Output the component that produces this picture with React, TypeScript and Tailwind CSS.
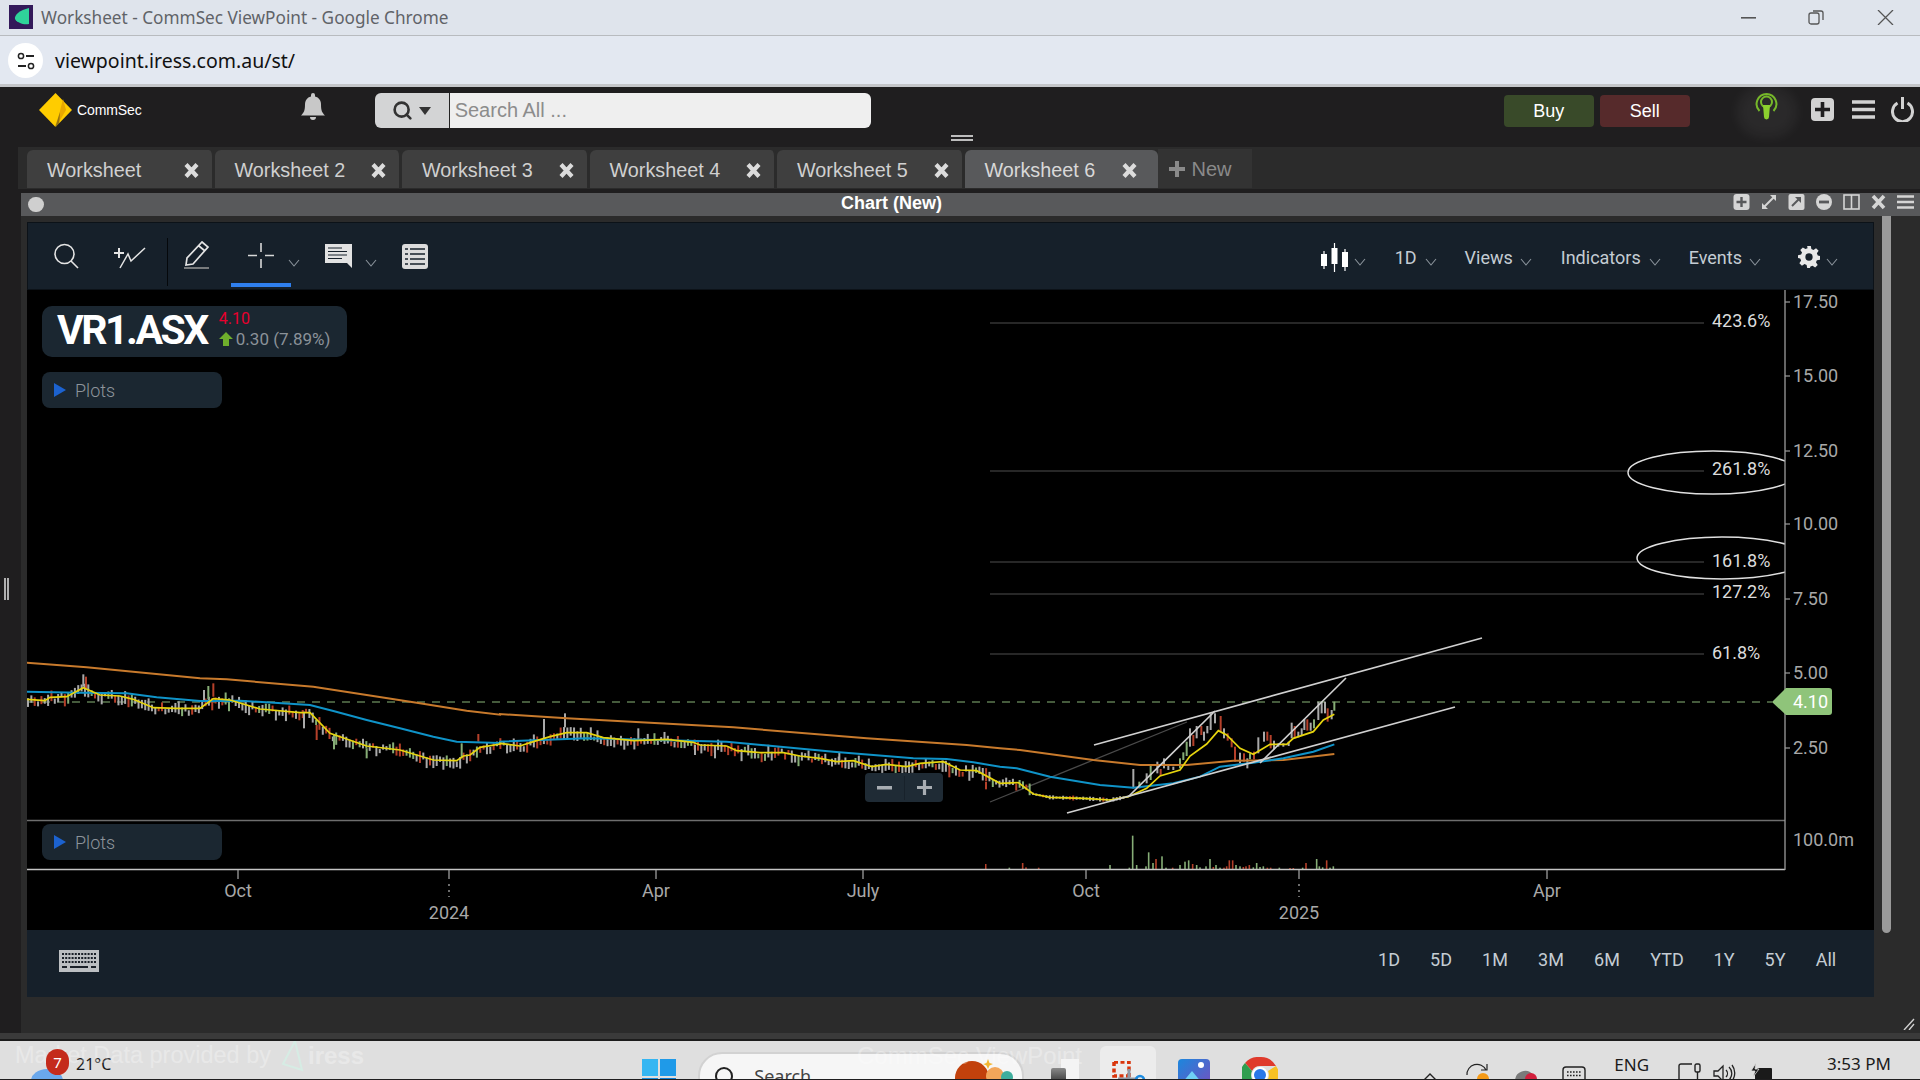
import { Search } from 'lucide-react';

type P = [number, number];

const z3 = (p: P): P => [1000 + p[0] / 3, 620 + p[1] / 3];
const z4 = (p: P): P => [p[0] / 3, 640 + p[1] / 3];
const z5 = (p: P): P => [500 + p[0] / 3, 640 + p[1] / 3];

const yellow: P[] = [
  ...([[80,178],[135,182],[150,172],[200,170],[250,143],[300,165],[360,168],[400,178],[460,203],[530,205],[600,205],[640,176],[690,180],[740,195],[780,207],[900,218],[930,218],[990,280],[1100,318],[1200,330],[1300,360],[1370,362],[1390,348],[1410,345],[1440,322],[1500,312]] as P[]).map(z4),
  ...([[0,310],[60,318],[100,305],[150,290],[200,278],[260,278],[310,293],[400,302],[500,298],[580,307],[600,315],[680,318],[710,332],[780,338],[850,338],[900,348],[960,355],[1010,365],[1060,362],[1115,380],[1160,373],[1220,380],[1260,370],[1330,365],[1380,390],[1430,392]] as P[]).map(z5),
  ...([[0,490],[55,488],[100,522],[150,532],[250,535],[330,540],[385,530],[440,505],[480,468],[540,450],[570,408],[620,372],[655,332],[680,345],[720,385],[760,403],[810,373],[860,373],[880,355],[940,335],[970,300],[1003,283]] as P[]).map(z3),
];

const blue: P[] = [
  ...([[80,155],[240,158],[380,160],[470,172],[600,183],[720,182],[930,195],[1000,213],[1100,240],[1200,265],[1300,290],[1370,305],[1500,309]] as P[]).map(z4),
  ...([[0,305],[260,295],[680,305],[1000,335],[1240,355],[1340,357],[1420,367]] as P[]).map(z5),
  ...([[0,440],[50,445],[150,470],[300,495],[400,503],[520,490],[600,470],[660,440],[760,428],[850,415],[940,395],[1003,373]] as P[]).map(z3),
];

const orange: P[] = [
  ...([[80,68],[260,82],[600,115],[680,118],[940,140],[1100,165],[1250,188],[1400,212],[1500,224]] as P[]).map(z4),
  ...([[0,222],[200,235],[700,262],[1100,295],[1400,315]] as P[]).map(z5),
  ...([[0,385],[60,390],[280,420],[420,435],[560,435],[700,422],[850,420],[1003,402]] as P[]).map(z3),
];

const GRAY = '#a9a9a9';
const GREEN = '#86ad76';
const RED = '#b5402a';

const pts = (a: P[]) => a.map((p) => p.join(',')).join(' ');

function yAt(x: number) {
  for (let i = 1; i < yellow.length; i++) {
    if (x <= yellow[i][0]) {
      const [x0, y0] = yellow[i - 1];
      const [x1, y1] = yellow[i];
      return y0 + ((y1 - y0) * (x - x0)) / (x1 - x0 || 1);
    }
  }
  return yellow[yellow.length - 1][1];
}

// seeded so the bars stay put between renders
let seed = 42;
const rnd = () => {
  seed = (seed * 16807) % 2147483647;
  return seed / 2147483647;
};

type Bar = [number, number, number, string];
const bars: Bar[] = [];
for (let x = 28; x < 1128; x += 3.35) {
  const r = rnd();
  const flat = x > 1030;
  const h = flat ? 2 + rnd() * 3 : 4 + rnd() * 9;
  const mid = yAt(x) + (flat ? 0 : 1.5 + (rnd() - 0.5) * 7);
  bars.push([x, mid - h / 2, mid + h / 2, r < 0.55 ? GRAY : r < 0.72 ? GREEN : RED]);
}

const spikes4: [number, number, number, string][] = [[250,103,140,GRAY],[258,110,145,RED],[640,130,170,RED],[625,138,178,GREEN],[612,150,185,GRAY],[912,215,265,GRAY],[950,255,300,RED],[1002,285,328,GREEN],[1100,325,355,GREEN],[1385,310,355,GREEN],[1435,282,305,RED]];
const spikes5: [number, number, number, string][] = [[132,237,282,GRAY],[195,220,262,GRAY],[415,265,300,GRAY],[645,315,355,GRAY],[585,315,345,GRAY],[1018,338,362,GRAY],[1348,375,412,RED],[1458,425,448,RED]];
const spikes3: [number, number, number, string][] = [[400,447,505,GRAY],[418,485,505,GREEN],[440,460,490,GRAY],[452,435,480,GREEN],[472,425,460,GRAY],[482,447,465,RED],[492,415,445,GRAY],[505,437,450,GRAY],[520,440,450,GRAY],[540,415,445,GREEN],[550,397,420,GREEN],[560,365,408,GREEN],[570,325,380,GRAY],[580,345,378,RED],[590,318,355,GRAY],[604,318,345,RED],[612,335,362,GRAY],[622,318,340,GRAY],[632,280,330,GRAY],[645,280,310,GRAY],[662,288,335,RED],[672,325,355,GRAY],[683,340,362,RED],[695,355,382,RED],[705,380,425,RED],[720,398,430,GRAY],[732,400,425,RED],[742,415,445,GRAY],[750,400,418,GREEN],[762,395,418,RED],[775,352,400,GRAY],[792,335,365,GRAY],[802,335,362,RED],[812,345,385,RED],[822,362,388,GRAY],[835,370,380,GRAY],[850,370,380,GRAY],[866,365,378,GRAY],[875,308,355,GRAY],[884,318,355,RED],[895,335,352,GRAY],[905,325,345,GRAY],[913,297,330,GRAY],[922,298,332,RED],[932,308,332,GRAY],[942,298,325,GREEN],[955,245,300,GRAY],[965,245,280,GRAY],[975,245,280,GRAY],[983,265,305,RED],[995,270,298,GRAY],[1003,245,272,GREEN]];
spikes4.forEach(([x, a, b, c]) => bars.push([x / 3, 640 + a / 3, 640 + b / 3, c]));
spikes5.forEach(([x, a, b, c]) => bars.push([500 + x / 3, 640 + a / 3, 640 + b / 3, c]));
spikes3.forEach(([x, a, b, c]) => bars.push([1000 + x / 3, 620 + a / 3, 620 + b / 3, c]));

const volume: [number, number, string][] = [[68,18,RED],[78,5,RED],[116,4,RED],[28,4,GREEN],[330,12,GREEN],[388,4,GREEN],[398,100,GREEN],[410,12,GREEN],[438,8,GREEN],[446,50,GREEN],[459,18,GREEN],[468,30,RED],[486,38,GREEN],[498,4,GREEN],[518,4,RED],[540,12,GREEN],[555,22,GREEN],[566,26,GREEN],[578,15,RED],[590,12,GREEN],[600,5,GREEN],[618,8,GREEN],[630,30,GREEN],[640,6,RED],[648,12,GREEN],[660,4,GREEN],[672,4,RED],[680,8,RED],[688,26,RED],[698,26,RED],[708,12,GREEN],[720,8,GREEN],[730,6,RED],[738,8,RED],[748,12,RED],[760,5,GREEN],[770,18,GREEN],[780,6,GREEN],[790,8,GREEN],[802,4,RED],[812,4,RED],[838,4,GREEN],[870,3,RED],[880,3,RED],[908,4,GREEN],[918,18,RED],[950,30,GREEN],[958,8,GREEN],[968,5,GREEN],[980,26,RED],[990,4,GREEN],[1000,8,GREEN]];

const priceTicks: [string, number][] = [['17.50', 302], ['15.00', 376], ['12.50', 451], ['10.00', 524], ['7.50', 599], ['5.00', 673], ['2.50', 748]];
const fibs: [string, number, number][] = [['423.6%', 323, 320], ['261.8%', 471, 468], ['161.8%', 562, 560], ['127.2%', 594, 591], ['61.8%', 654, 652]];
const xTicks: [string, number][] = [['Oct', 238], ['Apr', 656], ['July', 863], ['Oct', 1086], ['Apr', 1547]];
const tabs = ['Worksheet', 'Worksheet 2', 'Worksheet 3', 'Worksheet 4', 'Worksheet 5'];
const ranges: [string, string][] = [['1D', 'w-[52px]'], ['5D', 'w-[52px]'], ['1M', 'w-[56px]'], ['3M', 'w-[56px]'], ['6M', 'w-[56px]'], ['YTD', 'w-[64px]'], ['1Y', 'w-[50px]'], ['5Y', 'w-[52px]'], ['All', 'w-[50px]']];

function Chevron({ className = '' }: { className?: string }) {
  return (
    <svg width="12" height="8" viewBox="0 0 12 8" className={className}>
      <path d="M1 1l5 6 5-6" fill="none" stroke="#8b949c" strokeWidth="1.1" />
    </svg>
  );
}

function CloseX() {
  return (
    <svg width="17" height="15" viewBox="0 0 17 15">
      <path d="M3 1.5l11 12M14 1.5l-11 12" stroke="#dcdcdc" strokeWidth="4.2" />
    </svg>
  );
}

function WindowIcons() {
  return (
    <div className="ml-auto mr-[6px] flex h-[15px] gap-[11px]">
      <svg width="17" height="16" viewBox="0 0 17 16"><rect x="0.5" width="16" height="16" rx="3" fill="#d5d5d5" /><path d="M8.5 3v10M3.5 8h10" stroke="#58595b" strokeWidth="2.4" /></svg>
      <svg width="16" height="16" viewBox="0 0 16 16"><path d="M2 14L14 2" stroke="#d5d5d5" strokeWidth="2" /><path d="M9 1h6v6zM1 9v6h6z" fill="#d5d5d5" /></svg>
      <svg width="17" height="16" viewBox="0 0 17 16"><rect x="0.5" width="16" height="16" rx="2" fill="#d5d5d5" /><path d="M4 12l7-7" stroke="#58595b" strokeWidth="2" /><path d="M7 3h6v6z" fill="#58595b" /></svg>
      <svg width="16" height="16" viewBox="0 0 16 16"><circle cx="8" cy="8" r="8" fill="#d5d5d5" /><rect x="3" y="6.6" width="10" height="2.8" fill="#58595b" /></svg>
      <svg width="17" height="16" viewBox="0 0 17 16"><rect x="1" y="1" width="15" height="14" fill="none" stroke="#d5d5d5" strokeWidth="1.6" /><path d="M8.5 1v14" stroke="#d5d5d5" strokeWidth="1.6" /></svg>
      <svg width="15" height="16" viewBox="0 0 15 16"><path d="M2 2l11 12M13 2L2 14" stroke="#d5d5d5" strokeWidth="3.6" /></svg>
      <svg width="17" height="16" viewBox="0 0 17 16"><path d="M0 2.5h17M0 8h17M0 13.5h17" stroke="#d5d5d5" strokeWidth="2.6" /></svg>
    </div>
  );
}

function ChartToolbar() {
  return (
    <div className="relative flex h-[68px] items-start border border-[#0c1218] bg-[#16202a] font-['Roboto',sans-serif] text-[18px] text-[#c4ccd3]">
      <svg className="ml-[25px] mt-[20px]" width="27" height="26" viewBox="0 0 27 26">
        <circle cx="11.5" cy="11" r="9.5" fill="none" stroke="#e4e4e4" strokeWidth="1.6" />
        <path d="M18 18l7 7" stroke="#e4e4e4" strokeWidth="1.6" />
      </svg>
      <svg className="ml-[34px] mt-[24px]" width="32" height="22" viewBox="0 0 32 22">
        <path d="M5 1v10M0 6h10" stroke="#e4e4e4" strokeWidth="2" />
        <path d="M6 21l8-14 3 7L31 1" fill="none" stroke="#e4e4e4" strokeWidth="1.5" />
      </svg>
      <div className="ml-[21px] mt-[15px] h-[48px] w-[1px] bg-[#05080b]" />
      <svg className="ml-[15px] mt-[18px]" width="28" height="28" viewBox="0 0 28 28">
        <path d="M19 1l6 5-15 17-7 1 1-7zM16 5l6 5" fill="none" stroke="#e4e4e4" strokeWidth="1.7" />
        <path d="M1 27h25" stroke="#9a9a9a" strokeWidth="1.5" />
      </svg>
      <div className="relative ml-[20px] h-full w-[60px]">
        <svg className="absolute left-[17px] top-[20px]" width="26" height="25" viewBox="0 0 26 25">
          <path d="M13 0v9M13 16v9M0 12.5h9M17 12.5h9" stroke="#d8d8d8" strokeWidth="1.6" />
        </svg>
        <div className="absolute bottom-[2px] left-0 h-[4px] w-[60px] bg-[#2f7fee]" />
      </div>
      <Chevron className="ml-[-3px] mt-[36px]" />
      <svg className="ml-[25px] mt-[21px]" width="27" height="24" viewBox="0 0 27 24">
        <path d="M0 0h27v24l-5-5H0z" fill="#e2e2e2" />
        <path d="M3 4h14M3 7.500h19M3 11h19M3 14.500h14" stroke="#16202a" strokeWidth="1.2" />
      </svg>
      <Chevron className="ml-[13px] mt-[36px]" />
      <svg className="ml-[25px] mt-[21px]" width="26" height="25" viewBox="0 0 26 25">
        <rect width="26" height="25" rx="3" fill="#dcdcdc" />
        <path d="M3 5h3M8 5h15M3 10h3M8 10h15M3 15h3M8 15h15M3 20h3M8 20h15" stroke="#16202a" strokeWidth="1.5" />
      </svg>
      <div className="ml-auto flex items-start">
        <svg className="mt-[20px]" width="27" height="29" viewBox="0 0 27 29">
          <path d="M3 8v18M13.500 0v29M24 6v22" stroke="#fff" strokeWidth="1.2" />
          <rect x="0" y="11" width="6" height="12" fill="#fff" />
          <rect x="10.500" y="5" width="6" height="16" fill="#fff" />
          <rect x="21" y="9" width="6" height="15" fill="#fff" />
        </svg>
        <Chevron className="ml-[6px] mt-[35px]" />
        <span className="ml-[29px] mt-[24px] leading-[21px]">1D</span>
        <Chevron className="ml-[8px] mt-[35px]" />
        <span className="ml-[28px] mt-[24px] leading-[21px]">Views</span>
        <Chevron className="ml-[7px] mt-[35px]" />
        <span className="ml-[29px] mt-[24px] leading-[21px]">Indicators</span>
        <Chevron className="ml-[8px] mt-[35px]" />
        <span className="ml-[28px] mt-[24px] leading-[21px]">Events</span>
        <Chevron className="ml-[7px] mt-[35px]" />
        <svg className="ml-[37px] mt-[23px]" width="22" height="22" viewBox="0 0 24 24">
          <path fill="#e8e8e8" fillRule="evenodd" d="M10 0h4l.6 3.3 2.3 1 2.800-1.900 2.800 2.800-1.900 2.800 1 2.300L24 10.900v4l-3.400.6-1 2.300 1.900 2.800-2.800 2.800-2.800-1.900-2.300 1L13 24h-3l-.6-3.400-2.300-1-2.800 1.900-2.800-2.800 1.900-2.800-1-2.300L0 13v-3l3.400-.6 1-2.300L2.500 4.300l2.800-2.800 2.800 1.900 2.300-1zM12 8a4 4 0 1 0 0 8 4 4 0 0 0 0-8z" />
        </svg>
        <Chevron className="ml-[6px] mt-[35px] mr-[35px]" />
      </div>
    </div>
  );
}

function ChartCanvas() {
  return (
    <svg width="1846" height="640" viewBox="27 290 1846 640" className="block font-['Roboto',sans-serif]">
      <defs>
        <clipPath id="plot"><rect x="27" y="290" width="1758" height="640" /></clipPath>
      </defs>
      {fibs.map(([label, y]) => (
        <line key={label} x1="990" x2="1704" y1={y} y2={y} stroke="#343434" strokeWidth="1.5" />
      ))}
      {fibs.map(([label, , ty]) => (
        <text key={label} x="1712" y={ty + 6.5} fontSize="18" fill="#dcdcdc">{label}</text>
      ))}
      <g clipPath="url(#plot)" fill="none" stroke="#e0e0e0" strokeWidth="1.5">
        <ellipse cx="1713" cy="472.5" rx="85" ry="21.500" />
        <ellipse cx="1722" cy="558" rx="85" ry="21" />
      </g>
      <line x1="27" x2="1772" y1="702" y2="702" stroke="#5c7a50" strokeWidth="1.6" strokeDasharray="8 7" />
      <line x1="990" y1="802" x2="1187" y2="722" stroke="#4a4a4a" strokeWidth="1.3" />
      {bars.map(([x, a, b, c], i) => (
        <rect key={i} x={x - 1} y={a} width="2" height={Math.max(b - a, 1)} fill={c} />
      ))}
      <polyline points={pts(orange)} fill="none" stroke="#c87a2c" strokeWidth="2" />
      <polyline points={pts(blue)} fill="none" stroke="#0f93c8" strokeWidth="2" />
      <polyline points={pts(yellow)} fill="none" stroke="#e6d40e" strokeWidth="1.7" />
      <g stroke="#d0d0d0" strokeWidth="1.7">
        <line x1="1094" y1="745" x2="1482" y2="638" />
        <line x1="1067" y1="813" x2="1455" y2="707" />
        <line x1="1128" y1="797" x2="1215" y2="711" />
        <line x1="1260" y1="763" x2="1346" y2="678" />
      </g>
      <line x1="27" x2="1785" y1="820.500" y2="820.500" stroke="#6e6e6e" strokeWidth="1.500" />
      {volume.map(([x, h, c], i) => (
        <rect key={i} x={1000 + x / 3 - 0.8} y={869 - h / 3} width="1.600" height={h / 3} fill={c} />
      ))}
      <rect x="985" y="864" width="1.500" height="5" fill={RED} />
      <line x1="27" x2="1785" y1="869.500" y2="869.500" stroke="#c4c4c4" strokeWidth="1.300" />
      <line x1="1785" x2="1785" y1="290" y2="870" stroke="#9c9c9c" strokeWidth="1.300" />
      {priceTicks.map(([label, y]) => (
        <g key={label}>
          <line x1="1785" x2="1790" y1={y} y2={y} stroke="#9c9c9c" strokeWidth="1.200" />
          <text x="1793" y={y + 5.500} fontSize="18" fill="#a8a8a8">{label}</text>
        </g>
      ))}
      <text x="1793" y="846" fontSize="18" fill="#a8a8a8">100.0m</text>
      <path d="M1772 702l14-14h43a3 3 0 0 1 3 3v21a3 3 0 0 1-3 3h-43z" fill="#8fc47a" />
      <text x="1793" y="708" fontSize="18" fill="#ffffff">4.10</text>
      {xTicks.map(([label, x], i) => (
        <g key={i}>
          <line x1={x} x2={x} y1="870" y2="879" stroke="#9c9c9c" strokeWidth="1.300" />
          <text x={x} y="897" fontSize="18" textAnchor="middle" fill="#a8a8a8">{label}</text>
        </g>
      ))}
      {[['2024', 449], ['2025', 1299]].map(([label, x]) => (
        <g key={label as string}>
          <line x1={x} x2={x} y1="870" y2="879" stroke="#9c9c9c" strokeWidth="1.300" />
          <line x1={x} x2={x} y1="884" y2="897" stroke="#9c9c9c" strokeWidth="1.400" strokeDasharray="2 4" />
          <text x={x} y="919" fontSize="18" textAnchor="middle" fill="#a8a8a8">{label}</text>
        </g>
      ))}
    </svg>
  );
}

function PlotsButton({ className }: { className: string }) {
  return (
    <div className={`absolute flex h-[36px] w-[180px] items-center rounded-[8px] bg-[#1b2731] pl-[12px] text-[18px] font-light text-[#8d949b] ${className}`}>
      <svg width="12" height="14" viewBox="0 0 12 14"><path d="M0 0l12 7-12 7z" fill="#1c62cf" /></svg>
      <span className="ml-[9px]">Plots</span>
    </div>
  );
}

function Taskbar() {
  return (
    <div className="relative flex h-[40px] items-start overflow-hidden border-t-[2px] border-[#1c1c1c] bg-[#dfdfdf] font-['Noto_Sans',sans-serif] text-[#1a1a1a]">
      {/* ghost text of the page footer, showing through the taskbar */}
      <div className="absolute left-[15px] top-[-3px] flex items-center font-['Liberation_Sans',sans-serif] text-[23.5px] text-white/30">
        <span>Market Data provided by</span>
        <svg className="ml-[10px]" width="24" height="32" viewBox="0 0 24 32"><path d="M14 1L2 24l19 6z" fill="none" stroke="#d6ece4" strokeWidth="2" /></svg>
        <span className="ml-[3px] text-[24px] font-bold">iress</span>
      </div>
      <span className="absolute left-[857px] top-[-3px] font-['Liberation_Sans',sans-serif] text-[24px] text-white/30">CommSec ViewPoint</span>

      <svg className="ml-[31px] mt-[28px]" width="33" height="14" viewBox="0 0 33 14">
        <ellipse cx="16" cy="12" rx="16" ry="12" fill="#6aa8ec" />
        <path d="M24 0l5-2 2 5z" fill="#f28a1e" />
      </svg>
      <div className="absolute left-[46px] top-[8px] flex h-[26px] w-[23px] items-center justify-center rounded-full bg-[#c42b1c] text-[15px] text-white">7</div>
      <span className="ml-[12px] mt-[12px] text-[16px] leading-[22px]">21°C</span>

      <div className="ml-[531px] mt-[18px] grid h-[36px] w-[34px] shrink-0 grid-cols-2 gap-[2px]">
        <div className="bg-[#35b6f2]" /><div className="bg-[#1f9ae8]" />
        <div className="bg-[#1a8fe0]" /><div className="bg-[#0f7fd6]" />
      </div>

      <div className="ml-[22px] mt-[11px] flex h-[44px] w-[326px] shrink-0 items-start rounded-t-[24px] border-[2px] border-[#d2d2d2] bg-[#f6f6f6]">
        <svg className="ml-[14px] mt-[12px]" width="20" height="26" viewBox="0 0 20 26"><circle cx="10" cy="10" r="8" fill="none" stroke="#222" strokeWidth="2" /><path d="M15 17l4 7" stroke="#222" strokeWidth="2" /></svg>
        <span className="ml-[20px] mt-[10px] text-[18px] leading-[24px] text-[#444]">Search</span>
        <svg className="ml-[144px] mt-[5px]" width="62" height="30" viewBox="0 0 62 30">
          <circle cx="17" cy="19" r="17" fill="#c2410c" />
          <circle cx="40" cy="17" r="9" fill="#f2a65a" />
          <circle cx="52" cy="18" r="6" fill="#3fae9d" />
          <path d="M33 0l1.500 4L38 5l-3.500 1.500L33 10l-1.500-3.500L28 5l3.500-1z" fill="#f2b632" />
        </svg>
      </div>

      <div className="relative ml-[27px] mt-[18px] h-[24px] w-[28px] shrink-0">
        <div className="absolute left-[10px] top-0 h-[24px] w-[18px] bg-[#f4f4f4]" />
        <div className="absolute left-0 top-[9px] h-[16px] w-[15px] rounded-t-[2px] bg-gradient-to-b from-[#8a8a8a] to-[#333]" />
      </div>

      <div className="ml-[21px] mt-[5px] h-[40px] w-[56px] shrink-0 rounded-[6px] bg-[#ececec] pl-[12px] pt-[15px]">
        <svg width="36" height="25" viewBox="0 0 36 25">
          <path d="M2 1h15v17" fill="none" stroke="#d9350b" strokeWidth="3.500" strokeDasharray="4 2.500" />
          <path d="M2 1v14h14" fill="none" stroke="#d9350b" strokeWidth="3.500" strokeDasharray="4 2.500" />
          <path d="M17 8v17M6 18h20" stroke="#8d98a5" strokeWidth="3" />
          <circle cx="28" cy="19" r="4" fill="none" stroke="#1c8be0" strokeWidth="2.500" />
        </svg>
      </div>

      <svg className="ml-[22px] mt-[18px] shrink-0" width="32" height="24" viewBox="0 0 32 24">
        <defs><linearGradient id="ph" x1="0" y1="0" x2="1" y2="1"><stop offset="0" stopColor="#1b87dd" /><stop offset="1" stopColor="#7a4dbd" /></linearGradient></defs>
        <rect width="32" height="32" rx="4" fill="url(#ph)" />
        <circle cx="23" cy="6" r="3" fill="#fff" />
        <path d="M4 24l10-12 10 12z" fill="#6fd1f5" />
      </svg>

      <svg className="ml-[32px] mt-[16px] shrink-0" width="36" height="26" viewBox="0 0 36 26">
        <path d="M18 0A18 18 0 0 1 34 9H18a9 9 0 0 0-8 5L3 6A18 18 0 0 1 18 0z" fill="#df3a2c" />
        <path d="M3 6l7 8a9 9 0 0 0 8 13l-6 9A18 18 0 0 1 3 6z" fill="#2f9e4f" />
        <path d="M34 9a18 18 0 0 1-22 27l6-9a9 9 0 0 0 8-13z" fill="#f6c123" />
        <circle cx="18" cy="18" r="7" fill="#2a78e8" stroke="#fff" strokeWidth="2" />
      </svg>

      <svg className="ml-[144px] mt-[32px] shrink-0" width="16" height="8" viewBox="0 0 16 8"><path d="M1 8l7-7 7 7" fill="none" stroke="#222" strokeWidth="1.400" /></svg>
      <svg className="ml-[28px] mt-[22px] shrink-0" width="23" height="18" viewBox="0 0 23 18">
        <path d="M1 12A10 10 0 0 1 20 7M21 1v6h-6" fill="none" stroke="#222" strokeWidth="1.200" />
        <circle cx="17" cy="16" r="6" fill="#f59a16" />
      </svg>
      <svg className="ml-[25px] mt-[26px] shrink-0" width="24" height="14" viewBox="0 0 24 14">
        <path d="M1 14a10 10 0 0 1 18-6v6z" fill="#7a7a7a" />
        <circle cx="17" cy="12" r="6" fill="#d21f3c" />
      </svg>
      <svg className="ml-[24px] mt-[25px] shrink-0" width="24" height="15" viewBox="0 0 24 15">
        <rect x="1" y="1" width="22" height="20" rx="3" fill="none" stroke="#222" strokeWidth="1.400" />
        <path d="M5 6h14M5 9.500h14" stroke="#222" strokeWidth="1.600" strokeDasharray="1.600 1.400" />
      </svg>
      <span className="ml-[28px] mt-[12px] text-[17px] leading-[24px]">ENG</span>
      <svg className="ml-[29px] mt-[22px] shrink-0" width="24" height="18" viewBox="0 0 24 18">
        <path d="M14 1H3a2 2 0 0 0-2 2v15" fill="none" stroke="#222" strokeWidth="1.400" />
        <rect x="17" y="1" width="5" height="8" rx="1.500" fill="none" stroke="#222" strokeWidth="1.400" />
        <path d="M19.500 9v9" stroke="#222" strokeWidth="1.400" />
      </svg>
      <svg className="ml-[11px] mt-[23px] shrink-0" width="24" height="17" viewBox="0 0 24 17">
        <path d="M1 7h4l5-5v15l-5-5H1z" fill="none" stroke="#222" strokeWidth="1.300" />
        <path d="M13 6a5 5 0 0 1 0 7M16 3a9 9 0 0 1 0 13M19 1a13 13 0 0 1 0 16" fill="none" stroke="#222" strokeWidth="1.300" />
      </svg>
      <svg className="ml-[13px] mt-[22px] shrink-0" width="24" height="18" viewBox="0 0 24 18">
        <path d="M8 5h13a1 1 0 0 1 1 1v12H5V8z" fill="#1a1a1a" />
        <path d="M6 0L1 8h4l-2 6 6-8H5z" fill="#1a1a1a" stroke="#dfdfdf" strokeWidth="0.800" />
      </svg>
      <span className="ml-[53px] mt-[11px] whitespace-nowrap text-[17px] leading-[24px]">3:53 PM</span>
    </div>
  );
}

export default function App() {
  return (
    <div className="flex h-[1080px] w-[1920px] flex-col overflow-hidden bg-[#1f1e1f] font-['Liberation_Sans',sans-serif]">
      {/* Browser title bar */}
      <div className="flex h-[36px] items-start border-b border-[#b8bbbf] bg-[#dfe4ec]">
        <svg className="ml-[9px] mt-[5px]" width="24" height="24" viewBox="0 0 24 24">
          <rect width="24" height="24" fill="#33195a" />
          <path d="M20 3C11 5 5 10 6 14c2 4 9 6 14 5z" fill="#2fd39a" />
        </svg>
        <span className="ml-[8px] mt-[5px] whitespace-nowrap font-['Noto_Sans',sans-serif] text-[17.2px] leading-[26px] text-[#5f6368]">Worksheet - CommSec ViewPoint - Google Chrome</span>
        <svg className="ml-auto mt-[17px]" width="15" height="2" viewBox="0 0 15 2"><rect width="15" height="1.600" fill="#555" /></svg>
        <svg className="ml-[52px] mt-[10px]" width="17" height="15" viewBox="0 0 17 15">
          <rect x="1" y="3" width="10" height="11" rx="2" fill="none" stroke="#555" strokeWidth="1.300" />
          <path d="M5 1h8a2 2 0 0 1 2 2v7" fill="none" stroke="#555" strokeWidth="1.300" />
        </svg>
        <svg className="ml-[52px] mr-[26px] mt-[10px]" width="17" height="15" viewBox="0 0 17 15"><path d="M1 0l15 15M16 0L1 15" stroke="#555" strokeWidth="1.300" /></svg>
      </div>

      {/* Address bar */}
      <div className="flex h-[51px] items-start border-b-[3px] border-[#c4c6c9] bg-[#e3e8f1]">
        <div className="ml-[8px] mt-[7px] flex h-[35px] w-[35px] items-center justify-center rounded-full bg-white">
          <svg width="18" height="18" viewBox="0 0 18 18">
            <circle cx="4" cy="4" r="2.600" fill="none" stroke="#222" strokeWidth="1.500" />
            <path d="M9 4h8M1 14h8" stroke="#222" strokeWidth="1.800" />
            <circle cx="14" cy="14" r="2.600" fill="none" stroke="#222" strokeWidth="1.500" />
          </svg>
        </div>
        <span className="ml-[12px] mt-[11px] font-['Noto_Sans',sans-serif] text-[19.5px] leading-[28px] text-[#111]">viewpoint.iress.com.au/st/</span>
      </div>

      {/* App header */}
      <div className="relative flex h-[60px] items-start bg-[#1f1e1f]">
        <svg className="ml-[39px] mt-[6px]" width="33" height="34" viewBox="0 0 33 34">
          <path d="M16.500 0L33 17 16.500 34 0 17z" fill="#ffcc00" />
          <path d="M24 6l3 11-10 17z" fill="#e8a800" />
          <path d="M16 34l5-15-1 15z" fill="#1f1e1f" opacity="0.400" />
        </svg>
        <span className="ml-[5px] mt-[14px] text-[14px] leading-[18px] tracking-[-0.1px] text-white">CommSec</span>
        <svg className="ml-[158px] mt-[6px]" width="26" height="28" viewBox="0 0 26 28">
          <path fill="#c8c8c8" d="M13 0a2 2 0 0 1 2 2v1.500c4 1 6 4 6 8 0 6 1 8 4 11H1c3-3 4-5 4-11 0-4 2-7 6-8V2a2 2 0 0 1 2-2zM10 24h6a3 3 0 0 1-6 0z" />
        </svg>
        <div className="ml-[49px] mt-[6px] flex h-[35px] w-[496px] overflow-hidden rounded-[6px]">
          <div className="flex w-[75px] items-center justify-center gap-[6px] border-r border-[#222] bg-[#d3d4d5]">
            <Search size={21} color="#333" strokeWidth={3} />
            <svg width="12" height="8" viewBox="0 0 12 8"><path d="M0 0h12L6 8z" fill="#333" /></svg>
          </div>
          <div className="flex-1 bg-[#efefef] pl-[5px] text-[20px] leading-[34px] text-[#8c8c8c]">Search All ...</div>
        </div>
        <div className="ml-[633px] mt-[8px] flex h-[32px] w-[90px] items-center justify-center rounded-[4px] bg-[#394a29] text-[18px] text-white">Buy</div>
        <div className="ml-[6px] mt-[8px] flex h-[32px] w-[90px] items-center justify-center rounded-[4px] bg-[#562a2b] text-[18px] text-white">Sell</div>
        <div className="relative ml-[65px] mt-[6px] h-[27px] w-[23px]">
          <div className="absolute left-[-18px] top-[-6px] h-[50px] w-[60px] rounded-full bg-white/5 blur-[6px]" />
          <svg className="relative" width="23" height="27" viewBox="0 0 23 27">
            <path d="M11.500 1a10 10 0 0 0-7 17M11.500 1a10 10 0 0 1 7 17" fill="none" stroke="#76b82a" strokeWidth="2" />
            <circle cx="11.500" cy="9" r="5.500" fill="none" stroke="#76b82a" strokeWidth="2" />
            <path d="M8 12h7l-1 12a2.500 2.500 0 0 1-5 0z" fill="#8ccf2e" />
          </svg>
        </div>
        <svg className="ml-[33px] mt-[11px]" width="23" height="23" viewBox="0 0 23 23">
          <rect width="23" height="23" rx="4" fill="#d2d2d2" />
          <path d="M11.500 4v15M4 11.500h15" stroke="#1f1e1f" strokeWidth="3.600" />
        </svg>
        <svg className="ml-[18px] mt-[13px]" width="23" height="19" viewBox="0 0 23 19"><path d="M0 2h23M0 9.500h23M0 17h23" stroke="#d2d2d2" strokeWidth="3.400" /></svg>
        <svg className="ml-[16px] mt-[10px]" width="23" height="25" viewBox="0 0 23 25">
          <path d="M6.500 6a10 10 0 1 0 10 0" fill="none" stroke="#d2d2d2" strokeWidth="3" />
          <path d="M11.500 0v12" stroke="#d2d2d2" strokeWidth="3" />
        </svg>
        <div className="absolute left-[951px] top-[48px] flex h-[6px] w-[22px] flex-col justify-between">
          <div className="h-[2px] bg-[#bdbdbd]" />
          <div className="h-[2px] bg-[#bdbdbd]" />
        </div>
      </div>

      {/* Worksheet tabs */}
      <div className="ml-[18px] flex h-[42px] items-end bg-[#2b2b2b] pb-[1px] pl-[9px]">
        {tabs.map((t) => (
          <div key={t} className="flex h-[38px] w-[187.500px] items-center rounded-t-[6px] border-r-[3px] border-[#2b2b2b] bg-[#3f3f3f] pl-[20px] pt-[3px] text-[19.8px] text-[#d0d0d0]">
            <span className="whitespace-nowrap">{t}</span>
            <span className="ml-auto mr-[12px] flex"><CloseX /></span>
          </div>
        ))}
        <div className="flex h-[38px] w-[193px] items-center rounded-t-[6px] bg-[#58595b] pl-[20px] pt-[3px] text-[19.8px] text-[#d8d8d8]">
          <span className="whitespace-nowrap">Worksheet 6</span>
          <span className="ml-auto mr-[20px] flex"><CloseX /></span>
        </div>
        <div className="flex h-[39px] w-[94px] items-center bg-[#333333] pl-[11px] text-[20px] text-[#8a8a8a]">
          <svg width="16" height="16" viewBox="0 0 16 16"><path d="M8 0v16M0 8h16" stroke="#8a8a8a" strokeWidth="4" /></svg>
          <span className="ml-[7px]">New</span>
        </div>
      </div>

      {/* Workspace */}
      <div className="flex h-[844px] bg-[#1f1e1f]">
        <div className="flex w-[21px] shrink-0 items-start pl-[4px] pt-[389px]">
          <div className="h-[22px] w-[2px] bg-[#b0b0b0]" />
          <div className="ml-[1px] h-[22px] w-[2px] bg-[#b0b0b0]" />
        </div>
        <div className="relative mt-[4px] flex-1 bg-[#2b2b2b]">
          <div className="flex h-[23px] items-start bg-[#58595b]">
            <div className="ml-[7px] mt-[4px] h-[15px] w-[16px] rounded-full bg-[#cfcfcf]" />
            <span className="ml-[797px] text-[18px] font-bold leading-[21px] text-white">Chart (New)</span>
            <div className="ml-auto mt-[1px] flex w-[200px]"><WindowIcons /></div>
          </div>
          <div className="flex items-start">
            <div className="ml-[6px] w-[1847px] pt-[6px]">
              <ChartToolbar />
              <div className="relative h-[640px] bg-black">
                <ChartCanvas />
                <div className="absolute left-[15px] top-[16px] flex h-[51px] w-[305px] items-start rounded-[10px] bg-[#1b2731] pl-[15px] font-['Roboto',sans-serif]">
                  <span className="mt-[3px] text-[41px] font-bold leading-[42px] tracking-[-2.500px] text-white">VR1.ASX</span>
                  <div className="ml-[12px] mt-[3px] flex flex-col">
                    <span className="text-[16px] leading-[20px] text-[#e8002d]">4.10</span>
                    <div className="flex items-center text-[17px] leading-[20px] text-[#8b9299]">
                      <svg width="14" height="14" viewBox="0 0 14 14"><path d="M7 0l7 7H10v7H4V7H0z" fill="#6fae2c" /></svg>
                      <span className="ml-[3px]">0.30 (7.89%)</span>
                    </div>
                  </div>
                </div>
                <PlotsButton className="left-[15px] top-[82px] font-['Roboto',sans-serif]" />
                <PlotsButton className="left-[15px] top-[534px] font-['Roboto',sans-serif]" />
                <div className="absolute left-[838px] top-[483px] flex h-[29px] w-[78px] items-center rounded-[4px] bg-[#1f2b35]">
                  <svg className="ml-[12px]" width="15" height="4" viewBox="0 0 15 4"><rect width="15" height="3.500" fill="#a8adb2" /></svg>
                  <div className="ml-[12px] h-[24px] w-[1px] bg-[#18222b]" />
                  <svg className="ml-[12px]" width="15" height="15" viewBox="0 0 15 15"><path d="M7.500 0v15M0 7.500h15" stroke="#a8adb2" strokeWidth="3.200" /></svg>
                </div>
              </div>
              <div className="flex h-[67px] items-start bg-[#16202a] font-['Roboto',sans-serif] text-[18px] text-[#c4ccd3]">
                <svg className="ml-[32px] mt-[20px]" width="40" height="22" viewBox="0 0 40 22">
                  <rect width="40" height="22" fill="#bcbfc2" />
                  <path d="M3 4h34M3 8h34M3 12h34" stroke="#1a2028" strokeWidth="2" strokeDasharray="2 1.200" />
                  <path d="M3 17h5M11 17h18M32 17h5" stroke="#1a2028" strokeWidth="2" />
                </svg>
                <div className="ml-[1264px] mt-[19px] flex leading-[22px]">
                  {ranges.map(([r, w]) => (
                    <span key={r} className={`text-center ${w}`}>{r}</span>
                  ))}
                </div>
              </div>
            </div>
            <div className="ml-[8px] h-[717px] w-[9px] rounded-b-full bg-[#9a9a9a]" />
          </div>
          <svg className="absolute bottom-[3px] right-[5px]" width="12" height="12" viewBox="0 0 12 12"><path d="M1 12L11 1M6 12l5-6" stroke="#d0d0d0" strokeWidth="1.400" /></svg>
        </div>
      </div>

      <div className="h-[6px] bg-[#3a3a3a]" />
      <Taskbar />
    </div>
  );
}
